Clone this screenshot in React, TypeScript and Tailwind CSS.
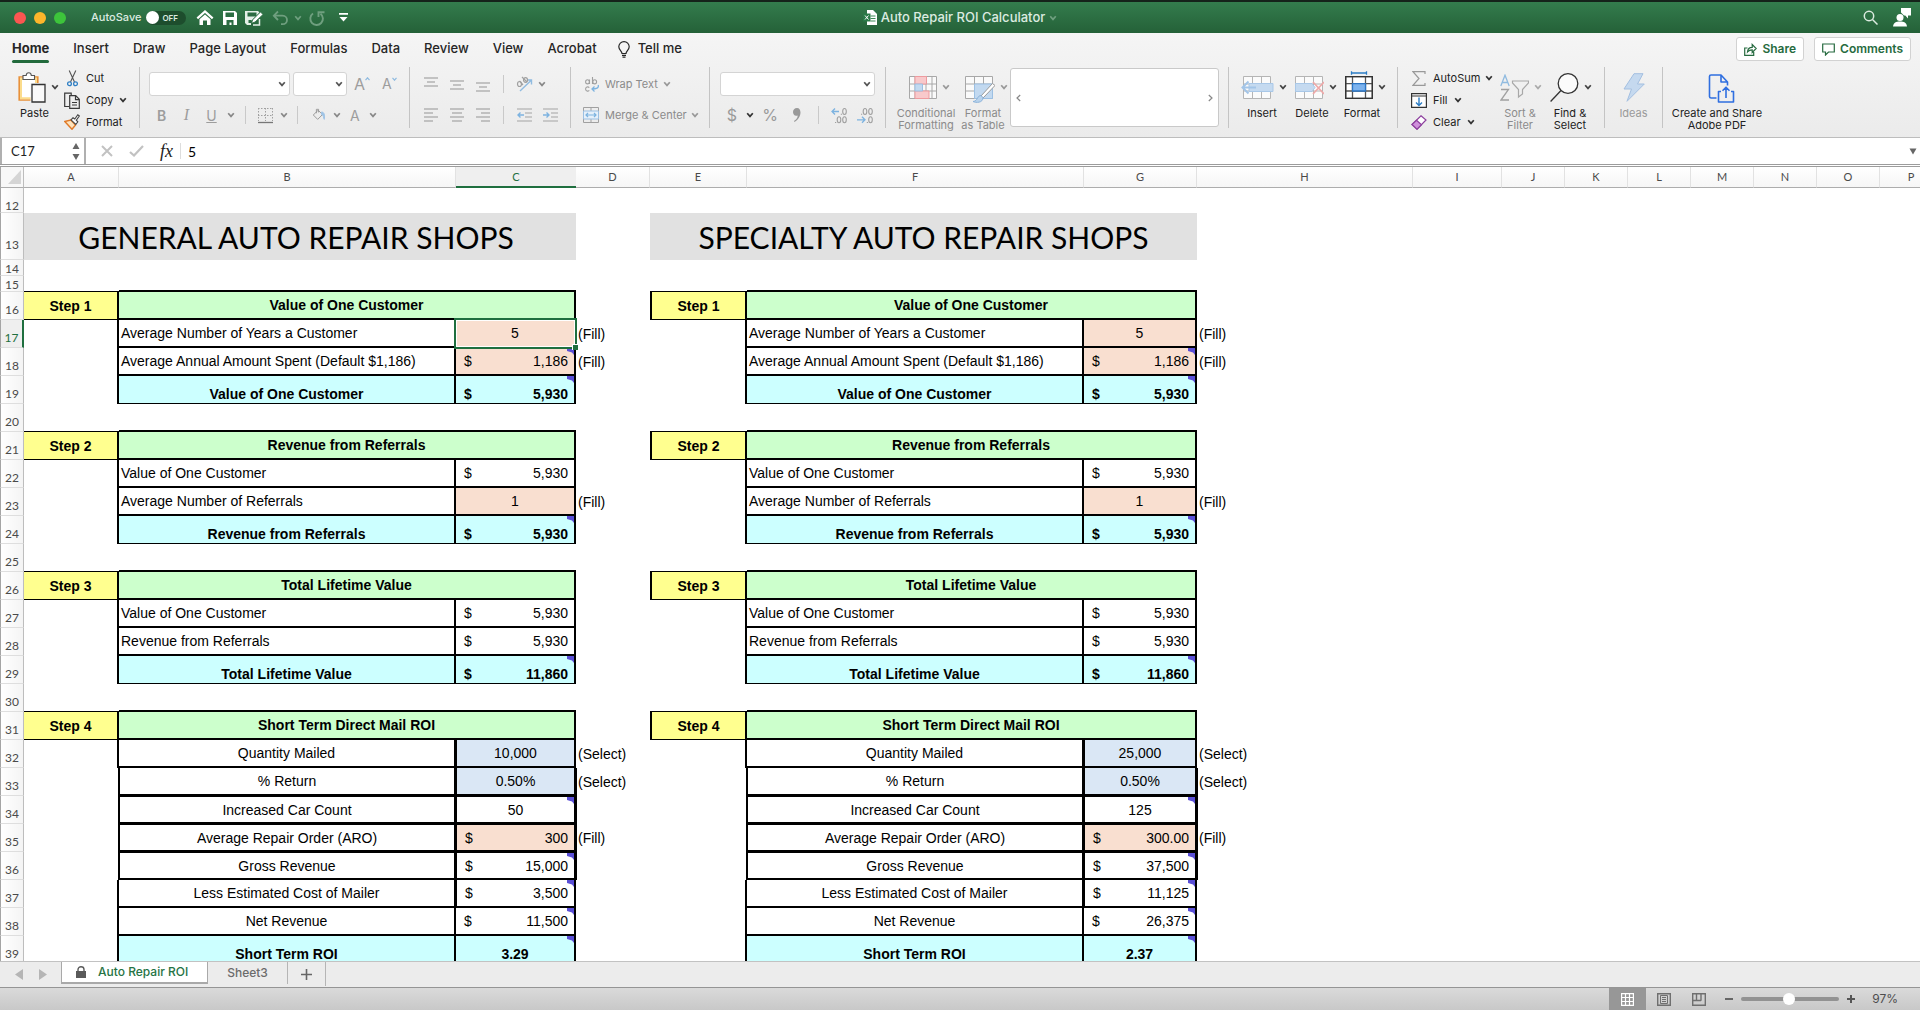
import React from 'react';

const UI = "font-['Inter','Liberation_Sans',sans-serif]";

function Chevron({ className = 'text-[#5a5a5a]' }: { className?: string }) {
  return (
    <svg className={`h-[6px] w-[8px] shrink-0 ${className}`} viewBox="0 0 8 6" fill="none" stroke="currentColor" strokeWidth="1.7" aria-hidden="true">
      <path d="M1.2 1.2 4 4.400 6.800 1.2" />
    </svg>
  );
}

/* ---------- title bar ---------- */

function TitleBar() {
  return (
    <header className="grid h-[33px] shrink-0 grid-cols-[1fr_auto_1fr] items-center border-t-2 border-t-[#15221a] bg-linear-to-b from-[#347c4d] to-[#246138] text-[12px] font-medium text-[#dcebe0]">
      <div className="flex items-center pl-[14px]">
        <button aria-label="Close" className="h-[12px] w-[12px] rounded-full bg-[#fb5651]" />
        <button aria-label="Minimize" className="ml-[8px] h-[12px] w-[12px] rounded-full bg-[#fdb62b]" />
        <button aria-label="Zoom window" className="ml-[8px] h-[12px] w-[12px] rounded-full bg-[#3dc43b]" />
        <span className="ml-[25px] text-[11px]" id="autosave">AutoSave</span>
        <button role="switch" aria-checked="false" aria-labelledby="autosave" className="ml-[5px] flex h-[14px] w-[40px] items-center rounded-full bg-[#1d4d2d] text-[8px] font-semibold">
          <span className="mr-[3px] h-[13px] w-[13px] rounded-full bg-white" />
          OFF
        </button>
        <button aria-label="Home" className="ml-[10px]">
          <svg width="18" height="16" viewBox="0 0 18 16" fill="none" stroke="#fff">
            <path d="M1.3 8.4 9 1.5l7.700 6.900" strokeWidth="2.200" />
            <path d="M3.500 9.200 9 4.500l5.500 4.700V15h-3.500v-4.500H7V15H3.500z" fill="#fff" stroke="none" />
          </svg>
        </button>
        <button aria-label="Save" className="ml-[9px]">
          <svg width="14" height="14" viewBox="0 0 14 14">
            <path d="M0 0h12l2 2v12H0z" fill="#fff" />
            <path d="M2.500 1.500h8.500v4.500H2.500zM3.500 9h7v5H8.500v-2.500h-2V14h-3z" fill="#2b6c42" />
          </svg>
        </button>
        <button aria-label="Save as" className="ml-[8px]">
          <svg width="19" height="16" viewBox="0 0 19 16">
            <path d="M0 1h13l1.500 1.500L6 11v4H2L0 13z" fill="#e4efe7" />
            <path d="M2.500 2.500h9v4h-9z" fill="#2b6c42" />
            <path d="M3.500 10h3v3h-3z" fill="#2b6c42" />
            <path d="M15.500 2 18 4.500 10 12l-3.500 1.200L7.700 9.700z" fill="#fff" stroke="#2b6c42" strokeWidth=".8" />
            <path d="M14.500 9v6H8" fill="none" stroke="#e4efe7" strokeWidth="1.500" />
          </svg>
        </button>
        <button aria-label="Undo" className="ml-[8px] text-[#6f9f7f]">
          <svg width="17" height="16" viewBox="0 0 17 16" fill="none" stroke="currentColor" strokeWidth="1.800">
            <path d="M6 1.500 1.800 5.700 6 10M2 5.700h8.500c6 0 6 8.500 0 8.500H9" />
          </svg>
        </button>
        <button aria-label="Undo history" className="ml-[5px]">
          <Chevron className="text-[#6f9f7f]" />
        </button>
        <button aria-label="Redo" className="ml-[7px] text-[#6f9f7f]">
          <svg width="16" height="16" viewBox="0 0 16 16" fill="none" stroke="currentColor" strokeWidth="1.900">
            <path d="M4 3.500a6.300 6.300 0 1 0 7.500.2M9.500 7V2.200h6" />
          </svg>
        </button>
        <button aria-label="Customize toolbar" className="ml-[14px]">
          <svg width="9" height="9" viewBox="0 0 9 9" fill="#fff">
            <path d="M0 0h9v1.700H0zM.5 4h8l-4 4.500z" />
          </svg>
        </button>
      </div>
      <h1 className="flex items-center text-[13px]">
        <svg className="mr-[4px]" width="14" height="15" viewBox="0 0 14 15">
          <path d="M4 0h6l4 4v11H4z" fill="#fff" />
          <path d="M7.500 6h5M7.500 8.500h5M7.500 11h5" stroke="#3c8a57" />
          <path d="M0 3.500h7.500v8H0z" fill="#2a7a48" />
          <path d="m2 5.500 3.500 4M5.500 5.500 2 9.500" stroke="#fff" />
        </svg>
        Auto Repair ROI Calculator
        <Chevron className="ml-[4px] text-[#6f9f7f]" />
      </h1>
      <div className="flex items-center justify-end pr-[8px]">
        <button aria-label="Search">
          <svg width="15" height="15" viewBox="0 0 15 15" fill="none" stroke="#dcebe0" strokeWidth="1.500">
            <circle cx="6" cy="6" r="4.700" />
            <path d="m9.500 9.500 5 5" />
          </svg>
        </button>
        <button aria-label="Account" className="ml-[15px]">
          <svg width="19" height="19" viewBox="0 0 19 19" fill="#fff">
            <circle cx="7" cy="9.500" r="3.500" />
            <path d="M0 18.500c.5-4 3-5 7-5s6.500 1 7 5z" />
            <path d="M8 0h10v7.500h-3v3l-2.700-3H11L8 4.500z" />
          </svg>
        </button>
      </div>
    </header>
  );
}

/* ---------- menu tabs ---------- */

const tabs = ['Insert', 'Draw', 'Page Layout', 'Formulas', 'Data', 'Review', 'View', 'Acrobat'];

function MenuTabs() {
  return (
    <nav className="flex h-[32px] shrink-0 items-center pr-[9px] pl-[12px] text-[13px] font-medium text-[#262626]">
      <div className="flex items-center gap-[24px]">
        <button className="relative font-bold">
          Home
          <span className="absolute inset-x-0 -bottom-[4px] h-[3px] rounded-full bg-[#226a3c]" />
        </button>
        {tabs.map((t) => (
          <button key={t}>{t}</button>
        ))}
      </div>
      <button className="ml-[21px] flex items-center">
        <svg className="mr-[8px]" width="12" height="17" viewBox="0 0 12 17" fill="none" stroke="#262626" strokeWidth="1.200">
          <path d="M4 12.500c0-2.500-3.200-3.500-3.200-6.700a5.200 5.200 0 0 1 10.400 0c0 3.200-3.200 4.200-3.200 6.700zM4 14.300h4M4.500 16.200h3" />
        </svg>
        Tell me
      </button>
      <div className="ml-auto flex gap-[10px] font-semibold text-[#276b40]">
        <button className="flex h-[24px] items-center gap-[5px] rounded-[3px] border border-[#d2d2d2] bg-white px-[7px] text-[12px]">
          <svg width="13" height="13" viewBox="0 0 13 13" fill="none" stroke="currentColor" strokeWidth="1.200">
            <path d="M3.500 5H.7v7.300h9V9M3.500 9c.2-3 2-4.700 4.700-4.700V1.500l4 4-4 4V6.800C6 6.800 4.700 7.500 3.500 9z" />
          </svg>
          Share
        </button>
        <button className="flex h-[24px] items-center gap-[5px] rounded-[3px] border border-[#d2d2d2] bg-white px-[7px] text-[12px]">
          <svg width="13" height="13" viewBox="0 0 13 13" fill="none" stroke="currentColor" strokeWidth="1.200">
            <path d="M.7 1h11.600v8H6.500l-3 3V9H.7z" />
          </svg>
          Comments
        </button>
      </div>
    </nav>
  );
}

/* ---------- ribbon ---------- */

function Sep() {
  return <div className="h-[61px] w-px shrink-0 bg-[#c4c4c4]" />;
}
function SmallSep() {
  return <div className="h-[18px] w-px shrink-0 bg-[#c9c9c9]" />;
}

function Combo({ label, width }: { label: string; width: string }) {
  return (
    <div className={`relative h-[24px] shrink-0 ${width}`}>
      <select aria-label={label} className="h-full w-full appearance-none rounded-[3px] border border-[#d4d4d4] bg-white" />
      <span className="pointer-events-none absolute top-[9px] right-[4px]">
        <Chevron className="text-[#555]" />
      </span>
    </div>
  );
}

function Lines({ rows, label }: { rows: number[][]; label: string }) {
  return (
    <button aria-label={label}>
      <svg width="14" height="15" viewBox="0 0 14 15" stroke="#a3a3a3" strokeWidth="1.200">
        {rows.map(([y, a, b]) => (
          <path key={y} d={`M${a} ${y}H${b}`} />
        ))}
      </svg>
    </button>
  );
}

function Tall({ label, icon, tone = 'text-[#222]', chev = 'text-[#444]', width, noChevron }: { label: React.ReactNode; icon: React.ReactNode; tone?: string; chev?: string; width: string; noChevron?: boolean }) {
  return (
    <button className={`flex shrink-0 flex-col items-center text-[11px] leading-[12px] ${tone} ${width}`}>
      <span className={`relative flex h-[40px] items-center ${noChevron ? '' : 'mr-[6px]'}`}>
        {icon}
        {!noChevron && (
          <span className="absolute top-[17px] -right-[13px] flex">
            <Chevron className={chev} />
          </span>
        )}
      </span>
      <span className="whitespace-nowrap">{label}</span>
    </button>
  );
}

const two = (a: string, b: string) => (
  <>
    {a}
    <br />
    {b}
  </>
);

function Ribbon() {
  return (
    <div className="flex h-[73px] shrink-0 items-start border-b border-[#bdbdbd] pt-[2px] text-[11px] text-[#222]">
      {/* clipboard */}
      <div className="flex w-[139px] shrink-0 pl-[17px]">
        <Tall
          label="Paste"
          width="w-[35px]"
          icon={
            <svg width="28" height="31" viewBox="0 0 28 31" fill="none">
              <path d="M1.200 5h18.600v23H1.200z" fill="#fff" stroke="#e8913a" strokeWidth="1.600" />
              <path d="M3 6.800h15v19.400H3z" stroke="#fbdc8c" strokeWidth="2" />
              <path d="M5 7.500v-4h3.200c.3-3.700 4.800-3.700 5.100 0h3.200v4z" fill="#fff" stroke="#555" strokeWidth="1.100" />
              <path d="M12.500 11h15v19h-15z" fill="#efefef" />
              <path d="M14 12.500h13V30H14z" fill="#f9f9f9" stroke="#333" strokeWidth="1.300" />
            </svg>
          }
        />
        <div className="ml-[12px]">
          <button className="flex h-[22px] items-center">
            <svg className="mr-[8px] ml-[3px]" width="11" height="17" viewBox="0 0 11 17" fill="none">
              <path d="M2.200.5 7.500 12M8.800.5 3.500 12" stroke="#555" strokeWidth="1.100" />
              <circle cx="2.500" cy="13.700" r="1.900" stroke="#2f7fc4" strokeWidth="1.300" />
              <circle cx="8.500" cy="13.700" r="1.900" stroke="#2f7fc4" strokeWidth="1.300" />
            </svg>
            Cut
          </button>
          <button className="flex h-[22px] items-center">
            <svg className="mr-[6px]" width="16" height="17" viewBox="0 0 16 17" fill="none" stroke="#3a3a3a" strokeWidth="1.200">
              <path d="M5 14.500H.7V1.200h6.500V3" />
              <path d="M5.700 3.700h6l3.600 3.600v9H5.700zM11.500 3.700v4h4M8 10.500h5M8 13h5" />
            </svg>
            Copy
            <Chevron className="ml-[6px] text-[#333]" />
          </button>
          <button className="flex h-[22px] items-center">
            <svg className="mr-[6px]" width="16" height="16" viewBox="0 0 16 16" fill="none">
              <path d="m.8 7.500 6-1.500 4.700 5-3.500 4.300z" fill="#fde3bd" stroke="#e07a28" strokeWidth="1.400" />
              <path d="m7 5.800 2-2L10.800 5l3-4.200L15.300 2l-3 4.200 1.500 1.600-2 2.700z" fill="#fff" stroke="#444" strokeWidth="1.100" />
            </svg>
            Format
          </button>
        </div>
      </div>
      <Sep />
      {/* font */}
      <div className="flex h-[61px] w-[269px] shrink-0 flex-col justify-between pt-[5px] pb-[3px] pl-[9px]">
        <div className="flex items-center">
          <Combo label="Font" width="w-[141px]" />
          <div className="w-[3px]" />
          <Combo label="Font size" width="w-[54px]" />
          <button aria-label="Increase font size" className="ml-[7px] flex items-start text-[16px] leading-[18px] text-[#9d9d9d]">
            A
            <svg className="mt-[2px]" width="5" height="4" viewBox="0 0 6 5" fill="none" stroke="#90bbe0" strokeWidth="1.500"><path d="m.5 4 2.500-3 2.500 3" /></svg>
          </button>
          <button aria-label="Decrease font size" className="ml-[12px] flex items-start text-[14px] leading-[18px] text-[#9d9d9d]">
            A
            <svg className="mt-[2px]" width="5" height="4" viewBox="0 0 6 5" fill="none" stroke="#90bbe0" strokeWidth="1.500"><path d="m.5 1 2.500 3 2.500-3" /></svg>
          </button>
        </div>
        <div className="flex h-[20px] items-center text-[14px] text-[#9d9d9d]">
          <button className="w-[25px] font-semibold">B</button>
          <button className="w-[25px] font-['Liberation_Serif',serif] text-[16px] italic">I</button>
          <button className="w-[25px] underline">U</button>
          <Chevron className="ml-[3px] text-[#888]" />
          <div className="w-[10px]" />
          <SmallSep />
          <svg className="ml-[11px]" width="17" height="17" viewBox="0 0 17 17" fill="none" stroke="#a0a0a0">
            <path d="M1.500 1v13M8.500 1v13M15.500 1v13M1 1.500h15M1 8.500h15" strokeDasharray="1.500 1.500" />
            <path d="M1 15.500h15" stroke="#777" strokeWidth="1.300" />
          </svg>
          <Chevron className="ml-[6px] text-[#888]" />
          <div className="w-[9px]" />
          <SmallSep />
          <svg className="ml-[14px]" width="14" height="14" viewBox="0 0 16 16" fill="none" stroke="#999" strokeWidth="1.100">
            <path d="m1.500 8 5.500-5.500 5 5L6.500 13zM5 6V1.500h2.500V5" />
            <path d="M11 4.500c4 .5 3.500 5 3 8.500-1.200-2-.5-5-3-5.500z" fill="#9fc4e6" stroke="#9fc4e6" />
          </svg>
          <Chevron className="ml-[7px] text-[#888]" />
          <button aria-label="Font color" className="ml-[9px]">A</button>
          <Chevron className="ml-[9px] text-[#888]" />
        </div>
      </div>
      <Sep />
      {/* alignment */}
      <div className="flex h-[61px] w-[160px] shrink-0 flex-col justify-between pt-[8px] pb-[3px] pl-[14px]">
        <div className="flex h-[18px] items-center">
          <Lines label="Top align" rows={[[1, 0, 14], [5, 3, 11], [9, 0, 14]]} />
          <div className="w-[12px]" />
          <Lines label="Middle align" rows={[[4, 0, 14], [8, 3, 11], [12, 0, 14]]} />
          <div className="w-[12px]" />
          <Lines label="Bottom align" rows={[[6, 0, 14], [10, 3, 11], [14, 0, 14]]} />
          <div className="w-[13px]" />
          <SmallSep />
          <button aria-label="Orientation" className="ml-[12px] flex items-center">
            <svg width="17" height="17" viewBox="0 0 17 17" fill="none" strokeWidth="1.200">
              <path d="M4 15 15 4.500M11 4h4.500v4.500" stroke="#90bbe0" strokeWidth="1.400" />
              <ellipse cx="3.500" cy="8" rx="2" ry="2.500" stroke="#a0a0a0" />
              <path d="m3.500 5 3.500 4M6 1l5 5" stroke="#a0a0a0" />
              <ellipse cx="9.500" cy="4" rx="2" ry="2.300" stroke="#a0a0a0" />
            </svg>
            <Chevron className="ml-[5px] text-[#888]" />
          </button>
        </div>
        <div className="flex h-[20px] items-center">
          <Lines label="Align left" rows={[[1, 0, 14], [5, 0, 9], [9, 0, 14], [13, 0, 9]]} />
          <div className="w-[12px]" />
          <Lines label="Center" rows={[[1, 0, 14], [5, 2, 12], [9, 0, 14], [13, 2, 12]]} />
          <div className="w-[12px]" />
          <Lines label="Align right" rows={[[1, 0, 14], [5, 5, 14], [9, 0, 14], [13, 5, 14]]} />
          <div className="w-[13px]" />
          <SmallSep />
          <button aria-label="Decrease indent" className="ml-[13px]">
            <svg width="15" height="15" viewBox="0 0 15 15" fill="none" stroke="#a3a3a3" strokeWidth="1.200">
              <path d="M0 1h15M8 5h7M8 9h7M0 13h15" />
              <path d="M7 7H1M3.500 4.500 1 7l2.500 2.500" stroke="#7db3e0" strokeWidth="1.400" />
            </svg>
          </button>
          <button aria-label="Increase indent" className="ml-[11px]">
            <svg width="15" height="15" viewBox="0 0 15 15" fill="none" stroke="#a3a3a3" strokeWidth="1.200">
              <path d="M0 1h15M8 5h7M8 9h7M0 13h15" />
              <path d="M0 7h6M3.500 4.500 6 7 3.500 9.500" stroke="#7db3e0" strokeWidth="1.400" />
            </svg>
          </button>
        </div>
      </div>
      <Sep />
      {/* wrap and merge */}
      <div className="flex h-[61px] w-[138px] shrink-0 flex-col justify-between pt-[8px] pb-[3px] pl-[12px] text-[#8b8b8b]">
        <button className="flex h-[18px] items-center">
          <svg className="mr-[5px]" width="17" height="17" viewBox="0 0 17 17" fill="none" stroke="#a0a0a0" strokeWidth="1.100">
            <path d="M6.500 3.500V8M9.500 1v7" />
            <ellipse cx="4.500" cy="5.800" rx="1.900" ry="2.100" />
            <ellipse cx="11.700" cy="5.800" rx="1.900" ry="2.100" />
            <path d="M6.300 11.700c-1.500-1.500-3.700-.6-3.700 1.300s2.200 2.800 3.700 1.300" />
            <path d="M15.200 9c1 3-2 4-6 4M11.500 10.500 9 13l2.500 2.500" stroke="#7db3e0" strokeWidth="1.300" />
          </svg>
          Wrap Text
          <Chevron className="ml-[5px] text-[#999]" />
        </button>
        <button className="flex h-[20px] items-center whitespace-nowrap">
          <svg className="mr-[6px]" width="16" height="16" viewBox="0 0 16 16" fill="none" stroke="#a0a0a0">
            <path d="M.5.500h15v15H.5zM8 .5V4M8 12v3.500" />
            <path d="M.5 4h15v8H.5z" fill="#e6f0fa" stroke="#9cc0e3" />
            <path d="M3 8h10M5 6 3 8l2 2M11 6l2 2-2 2" stroke="#7db3e0" strokeWidth="1.200" />
          </svg>
          Merge &amp; Center
          <Chevron className="ml-[4px] text-[#999]" />
        </button>
      </div>
      <Sep />
      {/* number */}
      <div className="flex h-[61px] w-[175px] shrink-0 flex-col justify-between pt-[5px] pb-[3px] pl-[10px]">
        <Combo label="Number format" width="w-[155px]" />
        <div className="flex h-[20px] items-center text-[16px] text-[#9a9a9a]">
          <button aria-label="Currency" className="w-[24px]">$</button>
          <Chevron className="ml-[2px] text-[#333]" />
          <button aria-label="Percent" className="ml-[7px] w-[18px]">%</button>
          <button aria-label="Comma style" className="ml-[10px] flex w-[16px] justify-center">
            <svg width="8" height="14" viewBox="0 0 8 14" fill="#999"><path d="M4 0c5 0 5 10-2.500 14l-.5-1C4 11 5 9 4.500 7.500 1.500 8.500 0 6 0 4s1.500-4 4-4z" /></svg>
          </button>
          <div className="w-[13px]" />
          <SmallSep />
          <button aria-label="Increase decimal" className="ml-[12px]">
            <svg width="17" height="17" viewBox="0 0 17 17" fill="none" stroke="#a0a0a0" strokeWidth="1.100">
              <path d="M8 4.500H1M4 1.500 1 4.500l3 3" stroke="#7db3e0" strokeWidth="1.300" />
              <ellipse cx="13.500" cy="4.500" rx="1.800" ry="3" />
              <ellipse cx="8" cy="12.800" rx="1.800" ry="3" />
              <ellipse cx="13.500" cy="12.800" rx="1.800" ry="3" />
              <path d="M4 15.500h1.200M9.800 7.200H11" />
            </svg>
          </button>
          <button aria-label="Decrease decimal" className="ml-[9px]">
            <svg width="17" height="17" viewBox="0 0 17 17" fill="none" stroke="#a0a0a0" strokeWidth="1.100">
              <path d="M0 12.800h8M5 9.800l3 3-3 3" stroke="#7db3e0" strokeWidth="1.300" />
              <ellipse cx="8" cy="4.500" rx="1.800" ry="3" />
              <ellipse cx="13.500" cy="4.500" rx="1.800" ry="3" />
              <ellipse cx="13.500" cy="12.800" rx="1.800" ry="3" />
              <path d="M4 7.200h1.200M9.800 15.500H11" />
            </svg>
          </button>
        </div>
      </div>
      <Sep />
      {/* styles */}
      <div className="flex w-[342px] shrink-0 pl-[9px]">
        <Tall
          width="w-[62px]"
          tone="text-[#8b8b8b]"
          chev="text-[#999]"
          label={two('Conditional', 'Formatting')}
          icon={
            <svg width="28" height="23" viewBox="0 0 28 23" fill="none" stroke="#a8a8a8">
              <path d="M.5.500h27v22H.5zM6 .5v22M17 .5v22M23 .5v22M.5 8h27M.5 15h27" fill="#fafafa" />
              <path d="M6 .5h11.500V8H6zM6 15h14v7.500H6z" fill="#f8c9cb" stroke="#ee9b9f" />
              <path d="M6 8h7.500v7H6z" fill="#c2d9f0" stroke="#9cc0e3" />
            </svg>
          }
        />
        <Tall
          width="w-[52px]"
          tone="text-[#8b8b8b]"
          chev="text-[#999]"
          label={two('Format', 'as Table')}
          icon={
            <svg className="mt-[4px]" width="30" height="27" viewBox="0 0 30 27" fill="none" stroke="#a8a8a8">
              <path d="M.5.500h27v22H.5zM9.500.5v22M18.500.5v22M.5 8h27M.5 15h27" fill="#fafafa" />
              <path d="M9.500 8h18v14.500h-18z" fill="#c2d9f0" stroke="#9cc0e3" />
              <path d="M27.500 7.500 16 20l2 2L30 9.500z" fill="#fff" stroke="#999" />
              <path d="M16 19.500c-4 0-3 5.500-8 6 3 1.500 10 1.500 10-4z" fill="#b9d3ec" stroke="#8ab2da" />
            </svg>
          }
        />
        <div className="mt-px mr-[9px] ml-px flex h-[59px] flex-1 items-center justify-between rounded-[3px] border border-[#c9c9c9] bg-white px-[5px]">
          <button aria-label="Previous styles">
            <svg width="5" height="8" viewBox="0 0 5 8" fill="none" stroke="#888" strokeWidth="1.200"><path d="M4.200 1 1 4l3.200 3" /></svg>
          </button>
          <button aria-label="Next styles">
            <svg width="5" height="8" viewBox="0 0 5 8" fill="none" stroke="#888" strokeWidth="1.200"><path d="M.8 1 4 4 .8 7" /></svg>
          </button>
        </div>
      </div>
      <Sep />
      {/* cells */}
      <div className="flex w-[168px] shrink-0 pl-[8px]">
        <Tall
          width="w-[50px]"
          label="Insert"
          icon={
            <svg className="-ml-[4px]" width="33" height="23" viewBox="0 0 33 23" fill="none" stroke="#b5b5b5">
              <path d="M2.500.500h27v22h-27zM11.500.5v22M20.500.5v22M2.500 8h27M2.500 15h27" fill="#fbfbfb" />
              <path d="M8 7.500h24v8H8z" fill="#c5daf0" stroke="#a9c8e8" />
              <path d="M15 11.500H1.500M7.500 5.500l-6 6 6 6" stroke="#a3c5e8" strokeWidth="2" />
            </svg>
          }
        />
        <Tall
          width="w-[50px]"
          label="Delete"
          icon={
            <svg width="29" height="23" viewBox="0 0 29 23" fill="none" stroke="#b5b5b5">
              <path d="M.5.500h27v22H.5zM9.500.5v22M18.500.5v22M.5 8h27M.5 15h27" fill="#fbfbfb" />
              <path d="M.5 7.500H17l3 4-3 4H.5z" fill="#c5daf0" stroke="#a9c8e8" />
              <path d="m18 6 11 12M29 6 18 18" stroke="#f0a8a8" strokeWidth="1.600" />
            </svg>
          }
        />
        <Tall
          width="w-[50px]"
          label="Format"
          icon={
            <svg className="-mt-[4px]" width="28" height="28" viewBox="0 0 28 28" fill="none" stroke="#333" strokeWidth="1.300">
              <path d="M.7 5.700h26.600v21.600H.7zM7.500 5.700v21.600M20.500 5.700v21.600M.7 12.700h26.600M.7 20h26.600" fill="#fff" stroke="#555" />
              <path d="M.7 5.700h26.600v21.600H.7z" />
              <path d="M7.500 12.700h13V20h-13z" fill="#7db3ee" stroke="#2b75c4" />
              <path d="M6.500 2h15M6.500.2v3.600M21.500.2v3.600" stroke="#2b7cc4" />
            </svg>
          }
        />
      </div>
      <Sep />
      {/* editing */}
      <div className="flex w-[206px] shrink-0 pl-[13px]">
        <div className="w-[84px]">
          <button className="flex h-[22px] items-center whitespace-nowrap">
            <svg className="mr-[7px] ml-px" width="14" height="15" viewBox="0 0 14 15" fill="none" stroke="#999" strokeWidth="1.200">
              <path d="M13 3V.700H1l6 6.800-6 6.800h12V12" />
            </svg>
            AutoSum
            <Chevron className="ml-[5px] text-[#333]" />
          </button>
          <button className="flex h-[22px] items-center">
            <svg className="mr-[6px]" width="16" height="15" viewBox="0 0 16 15" fill="none" stroke="#333" strokeWidth="1.200">
              <path d="M.6.600h14.800v13.800H.6zM.6 3h14.800" fill="#fff" />
              <path d="M8 4.500v8M5 9.500l3 3 3-3" stroke="#2b7cc4" strokeWidth="1.400" />
            </svg>
            Fill
            <Chevron className="ml-[6px] text-[#333]" />
          </button>
          <button className="flex h-[22px] items-center">
            <svg className="mr-[6px]" width="16" height="15" viewBox="0 0 16 15" fill="none" stroke="#8d3f9e" strokeWidth="1.200">
              <path d="m10 .8 5 4.200L6 14.200 1 9.500z" fill="#fff" />
              <path d="m5.500 5.200 5 4.500L6 14.200 1 9.500z" fill="#cf8fdb" />
            </svg>
            Clear
            <Chevron className="ml-[6px] text-[#333]" />
          </button>
        </div>
        <Tall
          width="w-[50px]"
          tone="text-[#8b8b8b]"
          chev="text-[#aaa]"
          label={two('Sort &', 'Filter')}
          icon={
            <svg className="-ml-[6px]" width="29" height="27" viewBox="0 0 29 27" fill="none">
              <path d="M.8 12 5 1.200 9.200 12M2.200 8.500h5.600" stroke="#90bbe0" strokeWidth="1.300" />
              <path d="M1 15.500h7.500L1 26h8" stroke="#a0a0a0" strokeWidth="1.300" />
              <path d="M12.500 7h16v2l-6 6.500V20l-4 3v-7.500l-6-6.500z" stroke="#a8a8a8" strokeWidth="1.200" />
            </svg>
          }
        />
        <Tall
          width="w-[50px]"
          label={two('Find &', 'Select')}
          icon={
            <svg className="-ml-[6px]" width="29" height="29" viewBox="0 0 29 29" fill="none" stroke="#333" strokeWidth="1.300">
              <circle cx="18" cy="10.500" r="9.800" fill="#fbfbfb" />
              <path d="M11 17.500.6 28.500" />
            </svg>
          }
        />
      </div>
      <Sep />
      <div className="flex w-[57px] shrink-0 justify-center">
        <Tall
          noChevron
          width="w-[40px]"
          tone="text-[#9a9a9a]"
          label="Ideas"
          icon={
            <svg width="22" height="29" viewBox="0 0 22 29" fill="#c5d9ef" stroke="#a3bfe0">
              <path d="M11 .7h9L14.500 11h6.800L4 28.300 8.500 16H1z" />
            </svg>
          }
        />
      </div>
      <Sep />
      <div className="flex shrink-0 pl-[9px]">
        <Tall
          noChevron
          width="w-[90px]"
          label={two('Create and Share', 'Adobe PDF')}
          icon={
            <svg className="mt-[2px] ml-[8px]" width="27" height="29" viewBox="0 0 27 29" fill="none" stroke="#2f6fe0" strokeWidth="1.600" strokeLinejoin="round">
              <path d="M8.500 24H3.200C2 24 1.500 23.300 1.500 22.500v-20C1.500 1.500 2.200 1 3 1h10l6.500 7v3.500M13 1v7h6.500" />
              <path d="M13 17.500h-2.500V28h15V17.500H23M18 24V13.500M14.500 16.700l3.500-3.500 3.500 3.500" />
            </svg>
          }
        />
      </div>
    </div>
  );
}

/* ---------- formula bar ---------- */

function FormulaBar() {
  return (
    <div className="flex h-[26px] shrink-0 items-stretch bg-white font-['Lato','Noto_Sans',sans-serif] text-[13px] text-[#222]">
      <div className="flex w-[86px] items-center border-r-2 border-l-2 border-[#b0b0b0] pr-[4px]">
        <input aria-label="Name box" defaultValue="C17" className="w-full min-w-0 pt-[2px] pl-[9px] outline-none" />
        <svg className="shrink-0" width="8" height="19" viewBox="0 0 8 19" fill="#666">
          <path d="M4 1 7.500 7h-7zM4 18 .5 12h7z" />
        </svg>
      </div>
      <div className="flex items-center pl-[15px]">
        <button aria-label="Cancel">
          <svg width="12" height="12" viewBox="0 0 12 12" stroke="#c2c2c2" strokeWidth="2"><path d="m1 1 10 10M11 1 1 11" /></svg>
        </button>
        <button aria-label="Enter" className="ml-[16px]">
          <svg width="15" height="12" viewBox="0 0 15 12" fill="none" stroke="#c2c2c2" strokeWidth="2.200"><path d="m1 7 4 3.500L14 1" /></svg>
        </button>
        <button aria-label="Insert function" className="ml-[16px] font-['Liberation_Serif',serif] text-[18px] leading-[20px] italic">fx</button>
        <div className="ml-[7px] h-[16px] w-px bg-[#ddd]" />
      </div>
      <input aria-label="Formula" defaultValue="5" className="min-w-0 flex-1 pl-[7px] text-[14px] text-black outline-none" />
      <button aria-label="Expand formula bar" className="pr-[3px]">
        <svg width="8" height="7" viewBox="0 0 8 7" fill="#666"><path d="M.5.500h7L4 6.500z" /></svg>
      </button>
    </div>
  );
}

/* ---------- sheet ---------- */

type Val = { text: string; money?: boolean; fill?: string; note?: boolean };
type Row = {
  n: number;
  kind: 'beforeHead' | 'head' | 'body' | 'total';
  label?: string;
  step?: string;
  hint?: string;
  center?: boolean;
  vals?: [Val, Val];
};

const PEACH = 'bg-[#f9dfd0]';
const BLUE = 'bg-[#dae7f5]';

const same = (text: string, o: Partial<Val> = {}): [Val, Val] => [{ text, ...o }, { text, ...o }];
const pair = (a: string, b: string, o: Partial<Val> = {}): [Val, Val] => [{ text: a, ...o }, { text: b, ...o }];

const rows: Row[] = [
  { n: 16, kind: 'head', step: 'Step 1', label: 'Value of One Customer' },
  { n: 17, kind: 'body', label: 'Average Number of Years a Customer', hint: '(Fill)', vals: same('5', { fill: PEACH }) },
  { n: 18, kind: 'body', label: 'Average Annual Amount Spent (Default $1,186)', hint: '(Fill)', vals: same('1,186', { money: true, fill: PEACH, note: true }) },
  { n: 19, kind: 'total', label: 'Value of One Customer', vals: same('5,930', { money: true, note: true }) },
  { n: 20, kind: 'beforeHead' },
  { n: 21, kind: 'head', step: 'Step 2', label: 'Revenue from Referrals' },
  { n: 22, kind: 'body', label: 'Value of One Customer', vals: same('5,930', { money: true }) },
  { n: 23, kind: 'body', label: 'Average Number of Referrals', hint: '(Fill)', vals: same('1', { fill: PEACH }) },
  { n: 24, kind: 'total', label: 'Revenue from Referrals', vals: same('5,930', { money: true, note: true }) },
  { n: 25, kind: 'beforeHead' },
  { n: 26, kind: 'head', step: 'Step 3', label: 'Total Lifetime Value' },
  { n: 27, kind: 'body', label: 'Value of One Customer', vals: same('5,930', { money: true }) },
  { n: 28, kind: 'body', label: 'Revenue from Referrals', vals: same('5,930', { money: true }) },
  { n: 29, kind: 'total', label: 'Total Lifetime Value', vals: same('11,860', { money: true, note: true }) },
  { n: 30, kind: 'beforeHead' },
  { n: 31, kind: 'head', step: 'Step 4', label: 'Short Term Direct Mail ROI' },
  { n: 32, kind: 'body', center: true, label: 'Quantity Mailed', hint: '(Select)', vals: pair('10,000', '25,000', { fill: BLUE }) },
  { n: 33, kind: 'body', center: true, label: '% Return', hint: '(Select)', vals: same('0.50%', { fill: BLUE }) },
  { n: 34, kind: 'body', center: true, label: 'Increased Car Count', vals: pair('50', '125', { note: true }) },
  { n: 35, kind: 'body', center: true, label: 'Average Repair Order (ARO)', hint: '(Fill)', vals: pair('300', '300.00', { money: true, fill: PEACH }) },
  { n: 36, kind: 'body', center: true, label: 'Gross Revenue', vals: pair('15,000', '37,500', { money: true, note: true }) },
  { n: 37, kind: 'body', center: true, label: 'Less Estimated Cost of Mailer', vals: pair('3,500', '11,125', { money: true, note: true }) },
  { n: 38, kind: 'body', center: true, label: 'Net Revenue', vals: pair('11,500', '26,375', { money: true, note: true }) },
  { n: 39, kind: 'total', label: 'Short Term ROI', vals: pair('3.29', '2.37', { note: true }) },
];

function RowHead({ n, className }: { n: number; className: string }) {
  const active = n === 17;
  return (
    <th
      scope="row"
      className={`border-b border-l border-b-[#dedede] border-l-[#a5a5a5] align-bottom font-['Lato','Noto_Sans',sans-serif] text-[12px] font-normal ${
        active ? 'border-r-2 border-r-[#1f6f3f] bg-[#efefef] text-[#1f6f3f]' : 'border-r border-r-[#bdbdbd] bg-linear-to-r from-white to-[#f4f4f4] text-[#4a4a4a]'
      } ${className}`}
    >
      {n}
    </th>
  );
}

function NoteMark() {
  return (
    <svg className="absolute top-0 right-0" width="7" height="7" viewBox="0 0 7 7" fill="#5a4fd6" aria-hidden="true">
      <path d="M0 0h7v7L5 4.500 0 3z" />
    </svg>
  );
}

function Block({ row, side }: { row: Row; side: 0 | 1 }) {
  const { n, kind } = row;
  if (kind === 'beforeHead') {
    return (
      <>
        <td className="border-b border-black" />
        <td className="border-b-2 border-black" colSpan={2} />
        <td />
      </>
    );
  }
  if (kind === 'head') {
    return (
      <>
        <td className={`border-r-2 border-b border-black bg-[#ffff8f] pt-px text-center font-bold ${side ? 'border-l-2' : ''}`}>{row.step}</td>
        <td colSpan={2} className="border-r-2 border-b-2 border-black bg-[#ccffcc] text-center font-bold">
          {row.label}
        </td>
        <td />
      </>
    );
  }
  const v = row.vals![side];
  const total = kind === 'total';
  const heavy = n >= 33 && n <= 36;
  const thickTop = n >= 34 && n <= 36;
  const thickLeft = n >= 32 && n <= 37;
  const bottom = total ? 'border-b' : 'border-b-2';
  const selected = n === 17 && side === 0;
  return (
    <>
      <td className={heavy ? 'border-r border-black' : 'border-r-2 border-black'} />
      <td
        className={`border-r-2 border-black ${bottom} ${thickTop ? 'border-t' : ''} ${heavy ? 'border-l' : ''} ${
          total ? 'bg-[#ccffff] text-center align-bottom leading-[18px] font-bold' : row.center ? 'text-center' : 'pl-[2px]'
        }`}
      >
        {row.label}
      </td>
      <td
        className={`relative border-r-2 border-black ${bottom} ${thickTop ? 'border-t' : ''} ${thickLeft ? 'border-l' : ''} ${
          total ? 'bg-[#ccffff] align-bottom leading-[18px] font-bold' : (v.fill ?? '')
        }`}
      >
        {v.money ? (
          <div className="flex justify-between pr-[6px] pl-[8px]">
            <span>$</span>
            <span>{v.text}</span>
          </div>
        ) : (
          <div className="text-center">{v.text}</div>
        )}
        {v.note && <NoteMark />}
        {selected && (
          <div className="absolute -top-[2px] -right-[3px] -bottom-[3px] -left-[2px] z-10 border-2 border-[#1f6f3f] outline -outline-offset-3 outline-white">
            <span className="absolute -right-[3px] -bottom-[3px] h-[6px] w-[6px] border-t border-l border-white bg-[#1f6f3f]" />
          </div>
        )}
      </td>
      <td className={heavy ? 'border-l border-black pl-px' : 'pl-[2px]'}>{row.hint}</td>
    </>
  );
}

const columns = 'ABCDEFGHIJKLMNOP'.split('');

function Sheet() {
  return (
    <main className="min-h-0 flex-1 overflow-hidden border-t-3 border-double border-[#9c9c9c] bg-white">
      <table className="w-[1943px] table-fixed border-separate border-spacing-0 font-['Liberation_Sans',Arial,sans-serif] text-[14px] leading-[18px] text-black">
        <colgroup>
          <col className="w-[24px]" />
          <col className="w-[95px]" />
          <col className="w-[337px]" />
          <col className="w-[120px]" />
          <col className="w-[74px]" />
          <col className="w-[97px]" />
          <col className="w-[337px]" />
          <col className="w-[113px]" />
          <col className="w-[216px]" />
          <col className="w-[89px]" />
          <col className="w-[63px]" span={7} />
        </colgroup>
        <thead>
          <tr className="h-[21px]">
            <td className="border-r border-b border-l border-r-[#bdbdbd] border-b-[#adadad] border-l-[#a5a5a5] bg-[#f8f8f8]">
              <svg className="ml-auto block" width="16" height="16" viewBox="0 0 16 16" fill="#d5d5d5">
                <path d="M14 1v14H1z" />
              </svg>
            </td>
            {columns.map((c) => (
              <th
                key={c}
                scope="col"
                className={`font-['Lato','Noto_Sans',sans-serif] text-[11px] leading-4 font-normal ${
                  c === 'C' ? 'border-b-2 border-[#1f6f3f] bg-[#efefef] text-[#1f6f3f]' : 'border-r border-b border-r-[#e2e2e2] border-b-[#adadad] bg-linear-to-b from-white to-[#f6f6f6] text-[#4a4a4a]'
                }`}
              >
                {c}
              </th>
            ))}
          </tr>
        </thead>
        <tbody>
          <tr className="h-[25px]">
            <RowHead n={12} className="pb-0 leading-[13px]" />
          </tr>
          <tr className="h-[47px]">
            <RowHead n={13} className="pb-[6px] leading-[16px]" />
            <td colSpan={3} className="bg-[#e1e1e1] pr-[8px] text-center font-['Lato','Noto_Sans',sans-serif] text-[30px] leading-[40px]">
              GENERAL AUTO REPAIR SHOPS
            </td>
            <td />
            <td colSpan={3} className="bg-[#e1e1e1] text-center font-['Lato','Noto_Sans',sans-serif] text-[30px] leading-[40px]">
              SPECIALTY AUTO REPAIR SHOPS
            </td>
          </tr>
          <tr className="h-[16px]">
            <RowHead n={14} className="pb-0 leading-[13px]" />
          </tr>
          <tr className="h-[16px]">
            <RowHead n={15} className="pb-0 leading-[13px]" />
            <Block row={{ n: 15, kind: 'beforeHead' }} side={0} />
            <Block row={{ n: 15, kind: 'beforeHead' }} side={1} />
          </tr>
          {rows.map((r) => (
            <tr key={r.n} className="h-[28px]">
              <RowHead n={r.n} className="pb-px leading-[16px]" />
              <Block row={r} side={0} />
              <Block row={r} side={1} />
            </tr>
          ))}
        </tbody>
      </table>
    </main>
  );
}

/* ---------- bottom bars ---------- */

function SheetTabs() {
  return (
    <div className="flex h-[26px] shrink-0 items-start border-t border-[#c2c2c2] bg-[#ececec] pl-[15px] text-[12px] font-medium text-[#6b6b6b]">
      <div className="flex h-full w-[46px] items-center gap-[16px]">
        <button aria-label="Previous sheet">
          <svg width="8" height="11" viewBox="0 0 8 11" fill="#b5b5b5"><path d="M8 0v11L0 5.500z" /></svg>
        </button>
        <button aria-label="Next sheet">
          <svg width="8" height="11" viewBox="0 0 8 11" fill="#b5b5b5"><path d="M0 0v11l8-5.500z" /></svg>
        </button>
      </div>
      <button className="flex h-[22px] w-[147px] items-center border-r border-b-2 border-l border-[#a9a9a9] bg-white pl-[14px] text-[#257344]">
        <svg className="mr-[12px]" width="10" height="12" viewBox="0 0 10 12" fill="#5a5a5a">
          <path d="M0 5h10v7H0z" />
          <path d="M2 5.500V3.500c0-3.700 6-3.700 6 0v2" fill="none" stroke="#5a5a5a" strokeWidth="1.400" />
        </svg>
        Auto Repair ROI
      </button>
      <button className="h-[22px] w-[80px] border-r border-[#b5b5b5]">Sheet3</button>
      <button aria-label="Add sheet" className="flex h-[24px] w-[38px] items-center justify-center border-r border-[#b5b5b5]">
        <svg width="11" height="11" viewBox="0 0 11 11" stroke="#666" strokeWidth="1.600"><path d="M5.500 0v11M0 5.500h11" /></svg>
      </button>
    </div>
  );
}

function StatusBar() {
  return (
    <footer className="flex h-[23px] shrink-0 items-center justify-end border-t border-[#959595] bg-linear-to-b from-[#dadada] to-[#c8c8c8] pr-[22px] text-[12px] text-[#4d4d4d]">
      <button aria-label="Normal view" className="flex h-full w-[37px] items-center justify-center bg-[#979797]">
        <svg width="13" height="13" viewBox="0 0 13 13" fill="none" stroke="#fff" strokeWidth="1.200">
          <path d="M.6.600h11.800v11.800H.6zM4.500.5v12M8.500.5v12M.5 4.500h12M.5 8.500h12" />
        </svg>
      </button>
      <button aria-label="Page layout view" className="ml-[11px]">
        <svg width="14" height="13" viewBox="0 0 14 13" fill="none" stroke="#6f6f6f">
          <path d="M.7.700h12.600v11.600H.7z" strokeWidth="1.400" />
          <path d="M3.500 2.500h7v8h-7zM5 4.500h4M5 6.500h4M5 8.500h4" />
        </svg>
      </button>
      <button aria-label="Page break view" className="ml-[21px]">
        <svg width="14" height="13" viewBox="0 0 14 13" fill="none" stroke="#6f6f6f" strokeWidth="1.400">
          <path d="M.7.700h12.600v11.600H.7zM4.500.7v7M9 .7v7M.7 7.500H9" />
        </svg>
      </button>
      <button aria-label="Zoom out" className="ml-[19px]">
        <svg width="8" height="8" viewBox="0 0 8 8" stroke="#666" strokeWidth="2"><path d="M0 4h8" /></svg>
      </button>
      <input
        type="range"
        aria-label="Zoom"
        min={0}
        max={200}
        defaultValue={97}
        className="ml-[8px] h-[4px] w-[98px] appearance-none rounded-full bg-[#929292] [&::-webkit-slider-thumb]:h-[12px] [&::-webkit-slider-thumb]:w-[12px] [&::-webkit-slider-thumb]:appearance-none [&::-webkit-slider-thumb]:rounded-full [&::-webkit-slider-thumb]:bg-white"
      />
      <button aria-label="Zoom in" className="ml-[8px]">
        <svg width="8" height="8" viewBox="0 0 8 8" stroke="#555" strokeWidth="2"><path d="M0 4h8M4 0v8" /></svg>
      </button>
      <span className="ml-[17px]">97%</span>
    </footer>
  );
}

export default function App() {
  return (
    <div className={`flex h-screen flex-col overflow-hidden ${UI}`}>
      <TitleBar />
      <div className="flex shrink-0 flex-col bg-linear-to-b from-[#f5f5f5] to-[#ebebeb]">
        <MenuTabs />
        <Ribbon />
      </div>
      <FormulaBar />
      <Sheet />
      <SheetTabs />
      <StatusBar />
    </div>
  );
}
